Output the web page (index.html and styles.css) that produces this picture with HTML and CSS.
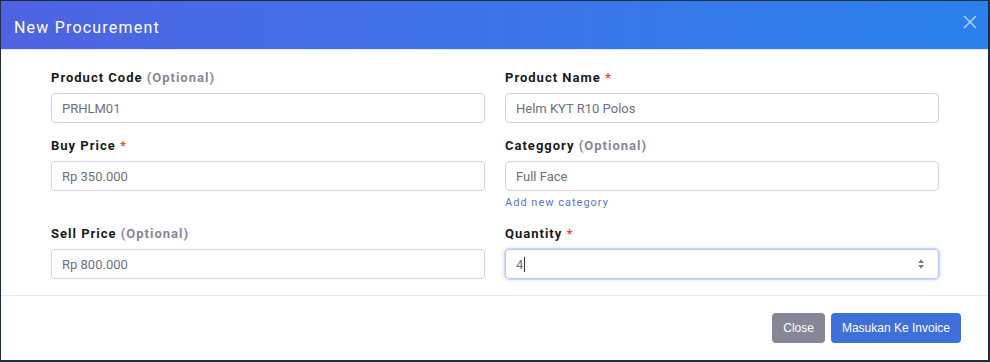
FILE: index.html
```html
<!DOCTYPE html>
<html lang="en">
<head>
  <meta charset="UTF-8">
  <meta name="viewport" content="width=device-width, initial-scale=1.0">
  <title>New Procurement</title>
  <link rel="stylesheet" href="styles.css">
</head>
<body>
  <div class="modal">
    <div class="modal-header">
      <h5 class="modal-title">New Procurement</h5>
      <button class="close-x" type="button" aria-label="Close">
        <svg width="16" height="16" viewBox="0 0 16 16"><path d="M2 2 L14 14 M14 2 L2 14" stroke="currentColor" stroke-width="1.6" fill="none"/></svg>
      </button>
    </div>

    <form class="modal-body">
      <div class="field">
        <label for="code">Product Code <span class="muted">(Optional)</span></label>
        <input type="text" id="code" value="PRHLM01">
      </div>
      <div class="field">
        <label for="name">Product Name <span class="req">*</span></label>
        <input type="text" id="name" value="Helm KYT R10 Polos">
      </div>

      <div class="field">
        <label for="buy">Buy Price <span class="req">*</span></label>
        <input type="text" id="buy" value="Rp 350.000">
      </div>
      <div class="field">
        <label for="category">Categgory <span class="muted">(Optional)</span></label>
        <input type="text" id="category" value="Full Face">
        <a class="help" href="#">Add new category</a>
      </div>

      <div class="field">
        <label for="sell">Sell Price <span class="muted">(Optional)</span></label>
        <input type="text" id="sell" value="Rp 800.000">
      </div>
      <div class="field">
        <label for="qty">Quantity <span class="req">*</span></label>
        <div class="number-box">
          <input type="text" id="qty" value="4" size="1">
          <span class="caret"></span>
          <svg class="spin" width="8" height="12" viewBox="0 0 8 12"><path d="M4 1.5 L7 5 H1 Z M4 10.5 L7 7 H1 Z" fill="#7a7a7a"/></svg>
        </div>
      </div>
    </form>

    <div class="modal-footer">
      <button type="button" class="btn btn-secondary">Close</button>
      <button type="button" class="btn btn-primary">Masukan Ke Invoice</button>
    </div>
  </div>
</body>
</html>
```

FILE: styles.css
```css
* { box-sizing: border-box; }
html, body { margin: 0; height: 100%; }
body { background: #1f2a44; padding: 1px 2px 2px 1px; font-family: Roboto, "Liberation Sans", Arial, sans-serif; }

.modal { background: #fff; height: 359px; display: flex; flex-direction: column; }

.modal-header { height: 49px; display: flex; align-items: center; justify-content: space-between; padding: 0 10px 0 13px; background: linear-gradient(90deg, #4f63e2 0%, #3d74e8 50%, #2a81ec 100%); border-bottom: 1px solid #e3e6f0; }
.modal-title { margin: 5px 0 0; color: #fff; font-size: 16px; font-weight: 400; letter-spacing: 1.2px; }
.close-x { background: none; border: none; padding: 0; color: rgba(255,255,255,0.6); display: flex; margin-top: -7px; cursor: pointer; }

.modal-body { display: grid; grid-template-columns: 1fr 1fr; column-gap: 20px; row-gap: 13px; padding: 18px 49px 16px 50px; border-bottom: 1px solid #e3e6f0; }
.field { display: flex; flex-direction: column; }
label { font-size: 13px; font-weight: 700; letter-spacing: 1px; color: #1a1a1a; line-height: 20px; margin-bottom: 5px; }
.muted { color: #858796; }
.req { color: #e74a3b; }
input { font-family: Roboto, "Liberation Sans", Arial, sans-serif; font-size: 13px; color: #6e707e; height: 30px; padding: 0 10px; border: 1px solid #d1d3e2; border-radius: 4px; outline: none; background: #fff; }
.help { font-size: 11px; letter-spacing: 1px; color: #5a78c0; text-decoration: none; line-height: 17px; margin-top: 3px; }

.number-box { height: 30px; display: flex; align-items: center; padding: 0 13px 0 10px; border: 1px solid #b9c7f2; border-radius: 4px; box-shadow: 0 0 0 1px rgba(78,115,223,0.15), 0 0 4px rgba(78,115,223,0.35); }
.number-box input { border: none; padding: 0; height: 20px; width: 7px; flex: none; }
.caret { width: 1px; height: 15px; background: #333; margin-left: 1px; }
.spin { margin-left: auto; }

.modal-footer { flex: 1; display: flex; justify-content: flex-end; align-items: flex-start; gap: 6px; padding: 17px 27px 0 0; }
.btn { font-family: "Liberation Sans", Arial, sans-serif; font-size: 12px; color: #fff; border: none; border-radius: 4px; height: 30px; padding: 0 11px; cursor: pointer; }
.btn-secondary { background: #858796; }
.btn-primary { background: #3f6fd8; }
```
